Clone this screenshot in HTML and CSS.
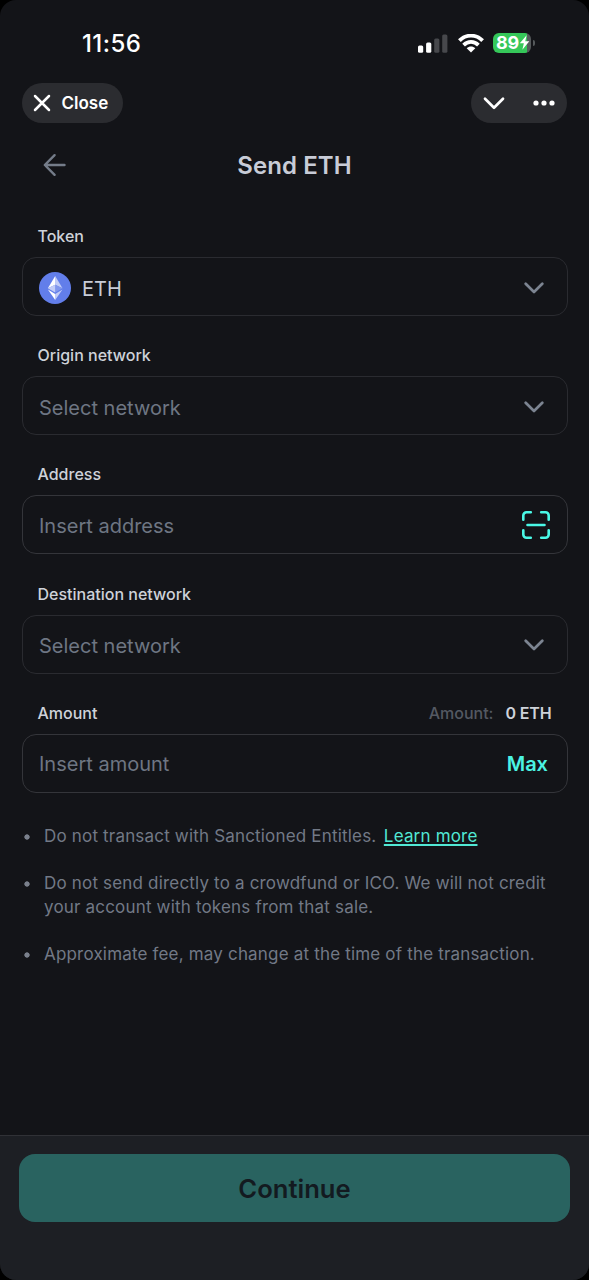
FILE: index.html
```html
<!DOCTYPE html>
<html lang="en">
<head>
<meta charset="utf-8">
<title>Send ETH</title>
<link rel="stylesheet" href="styles.css">
</head>
<body>
<div class="screen">
  <div class="status">
    <span class="time">11:56</span>
    <div class="indicators">
      <svg class="signal" width="30" height="19" viewBox="0 0 30 19">
        <rect x="0" y="11.5" width="5.2" height="7.2" rx="1.5" fill="#fff"/>
        <rect x="8.1" y="8.5" width="5.2" height="10.2" rx="1.5" fill="#fff"/>
        <rect x="16.2" y="4.5" width="5.2" height="14.2" rx="1.5" fill="#47484c"/>
        <rect x="24.2" y="0.5" width="5.2" height="18.2" rx="1.5" fill="#47484c"/>
      </svg>
      <svg class="wifi" width="26" height="19" viewBox="0 0 26 19">
        <g fill="none" stroke="#fff" stroke-width="3.8">
          <path d="M1.4 6.7C8-.05 18-.05 24.6 6.7"/>
          <path d="M5.6 11.1c4.3-4.2 10.500-4.200 14.800 0"/>
        </g>
        <path d="M8.700 14.200c2.500-2.200 6.100-2.200 8.600 0L13 18.600z" fill="#fff"/>
      </svg>
      <div class="battery">
        <span class="level">89</span>
        <svg class="bolt" width="11" height="15" viewBox="0 0 10 14"><path d="M7 .3.600 7.800h3.800L3 13.700l6.500-7.900H5.700z" fill="#fff"/></svg>
        <span class="tip"></span>
      </div>
    </div>
  </div>

  <div class="toolbar">
    <div class="pill close">
      <svg width="18" height="18" viewBox="0 0 18 18"><path d="M2 2l14 14M16 2L2 16" stroke="#fff" stroke-width="2.500" stroke-linecap="round"/></svg>
      <span>Close</span>
    </div>
    <div class="pill menu">
      <svg width="22" height="14" viewBox="0 0 22 14"><path d="M2 2.800l9 9 9-9" fill="none" stroke="#fff" stroke-width="2.700" stroke-linecap="round" stroke-linejoin="round"/></svg>
      <svg width="22" height="6" viewBox="0 0 22 6" fill="#fff"><circle cx="3" cy="3" r="2.600"/><circle cx="11" cy="3" r="2.600"/><circle cx="19" cy="3" r="2.600"/></svg>
    </div>
  </div>

  <header class="header">
    <svg class="back" width="24" height="24" viewBox="0 0 24 24"><path d="M21.500 12H2M11.600 2.200L1.800 12l9.800 9.800" fill="none" stroke="#747c89" stroke-width="2.400" stroke-linecap="round" stroke-linejoin="round"/></svg>
    <h1 class="title">Send ETH</h1>
  </header>

  <main class="form">
    <div class="field">
      <div class="label-row"><span class="label">Token</span></div>
      <div class="box">
        <svg class="coin" width="32" height="32" viewBox="0 0 32 32">
          <circle cx="16" cy="16" r="16" fill="#627eea"/>
          <path d="M16.200 4v8.870l7.300 3.350z" fill="#c3cdf7"/>
          <path d="M16.200 4L8.900 16.220l7.300-3.350z" fill="#fff"/>
          <path d="M16.200 21.970v6.030l7.300-10.380z" fill="#c3cdf7"/>
          <path d="M16.200 28v-6.030L8.900 17.620z" fill="#fff"/>
          <path d="M16.200 20.570l7.300-4.350-7.300-3.350z" fill="#8197ee"/>
          <path d="M8.900 16.220l7.300 4.350v-7.700z" fill="#c3cdf7"/>
        </svg>
        <span class="value">ETH</span>
        <svg class="chevron" width="20" height="12" viewBox="0 0 20 12"><path d="M1.700 1.700l8.300 8.300 8.300-8.300"/></svg>
      </div>
    </div>
    <div class="field">
      <div class="label-row"><span class="label">Origin network</span></div>
      <div class="box">
        <span class="placeholder">Select network</span>
        <svg class="chevron" width="20" height="12" viewBox="0 0 20 12"><path d="M1.700 1.700l8.300 8.300 8.300-8.300"/></svg>
      </div>
    </div>
    <div class="field">
      <div class="label-row"><span class="label">Address</span></div>
      <div class="box input">
        <span class="placeholder">Insert address</span>
        <svg class="scan" width="28" height="28" viewBox="0 0 28 28"><path d="M1.300 8.800V4.500a3.200 3.200 0 0 1 3.200-3.200h4.300M19.200 1.300h4.300a3.200 3.200 0 0 1 3.200 3.200v4.300M26.700 19.200v4.300a3.200 3.200 0 0 1-3.200 3.200h-4.300M8.800 26.700H4.500a3.200 3.200 0 0 1-3.200-3.200v-4.300M5.500 14h17"/></svg>
      </div>
    </div>
    <div class="field">
      <div class="label-row"><span class="label">Destination network</span></div>
      <div class="box">
        <span class="placeholder">Select network</span>
        <svg class="chevron" width="20" height="12" viewBox="0 0 20 12"><path d="M1.700 1.700l8.300 8.300 8.300-8.300"/></svg>
      </div>
    </div>
    <div class="field">
      <div class="label-row">
        <span class="label">Amount</span>
        <span class="balance"><span class="balance-label">Amount:</span><span class="balance-value">0 ETH</span></span>
      </div>
      <div class="box input">
        <span class="placeholder">Insert amount</span>
        <span class="max">Max</span>
      </div>
    </div>
    <ul class="notes">
      <li>Do not transact with Sanctioned Entitles. <a class="link">Learn more</a></li>
      <li>Do not send directly to a crowdfund or ICO. We will not credit<br>your account with tokens from that sale.</li>
      <li>Approximate fee, may change at the time of the transaction.</li>
    </ul>
  </main>

  <footer class="footer">
    <div class="continue">Continue</div>
  </footer>
</div>
</body>
</html>
```
FILE: styles.css
```css
* { box-sizing: border-box; }
body { margin: 0; background: #000; font-family: Inter, "Liberation Sans", sans-serif; }
svg { display: block; flex: none; }
.screen {
  width: 589px; height: 1280px; overflow: hidden;
  display: flex; flex-direction: column;
  background: #131418; border-radius: 16px; white-space: nowrap;
}
.status {
  height: 83px; padding: 4px 58px 0 82px;
  display: flex; align-items: center; justify-content: space-between;
}
.time { font-size: 24px; font-weight: 500; line-height: 30px; color: #fff; letter-spacing: 0.4px; }
.indicators { display: flex; align-items: center; gap: 9px; }
.signal { margin-right: 1px; }
.wifi { margin-top: -1px; }
.battery {
  position: relative; width: 38px; height: 20px; margin-top: -2px; border-radius: 6px;
  background: linear-gradient(to right, #35c759 34.500px, #55595b 34.500px);
  display: flex; align-items: center; padding-left: 3px;
}
.level { font-size: 18px; font-weight: 700; line-height: 20px; letter-spacing: -0.3px; color: #fff; }
.tip { position: absolute; right: -3.500px; top: 7px; width: 2px; height: 6px; border-radius: 0 2px 2px 0; background: #55595b; }
.toolbar { display: flex; justify-content: space-between; padding: 0 22px; }
.pill { height: 40px; border-radius: 20px; background: #2b2c30; display: flex; align-items: center; }
.close { width: 101px; padding-left: 10.500px; gap: 11px; color: #fff; font-size: 17px; font-weight: 600; }
.menu { width: 96px; padding: 0 12.500px 0 12px; justify-content: space-between; }
.header { position: relative; height: 84px; padding-top: 1px; display: flex; align-items: center; justify-content: center; }
.back { position: absolute; left: 43px; top: 30px; }
.title { margin: 0; color: #c8ccd7; font-size: 24px; font-weight: 600; line-height: 30px; letter-spacing: 0.1px; }
.form { flex: 1; padding: 17px 21.500px 0; }
.field { height: 119.200px; }
.label-row { height: 33px; padding: 0 16px; display: flex; justify-content: space-between; line-height: 24px; font-size: 16px; font-weight: 500; color: #ced2d9; }
.balance { display: flex; gap: 12px; }
.balance-label { color: #545962; }
.balance-value { font-weight: 600; letter-spacing: -0.15px; }
.box { height: 59px; border: 1.500px solid #2a2b30; border-radius: 14px; display: flex; align-items: center; padding: 2px 22.500px 0 16.500px; font-size: 20px; line-height: 28px; }
.input { border-color: #34353a; padding: 0 17px 0 16.500px; }
.coin { margin-right: 11px; }
.value, .placeholder, .max { padding-top: 2px; }
.value { color: #c8ccd7; }
.placeholder { color: #6e7683; }
.chevron, .scan, .max { margin-left: auto; }
.chevron path { fill: none; stroke: #7c8491; stroke-width: 2.700; stroke-linecap: round; stroke-linejoin: round; }
.scan path { fill: none; stroke: #4af8e6; stroke-width: 2.600; stroke-linecap: round; }
.max { color: #4bf3e3; font-weight: 600; padding-right: 1.500px; }
.notes { list-style: none; margin: 4px 0 0; padding: 0; display: flex; flex-direction: column; gap: 23px; color: #727986; font-size: 17px; line-height: 24px; letter-spacing: 0.180px; }
.notes li { padding-left: 22.500px; background: radial-gradient(circle at 5px 13px, #7a808c 2.300px, transparent 3px); }
.link { margin-left: 2.500px; color: #51e8d4; text-decoration: underline; text-underline-offset: 2px; text-decoration-thickness: 1.500px; }
.footer { height: 145px; border-top: 1.500px solid #303136; background: #1d1f24; padding: 18px 19px 0; }
.continue { height: 68px; border-radius: 16px; background: #296360; color: #131a20; display: flex; align-items: center; justify-content: center; font-size: 25.600px; font-weight: 600; }
```
